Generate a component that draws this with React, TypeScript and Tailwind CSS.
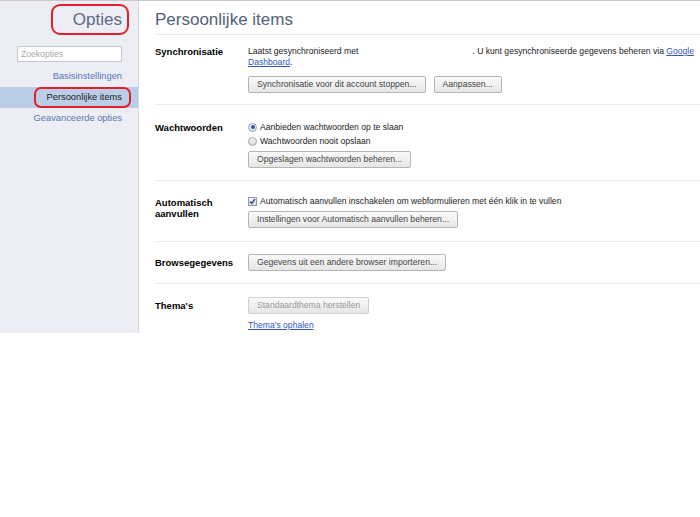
import React from 'react';

const body = 'text-[8.6px] leading-[11px] text-[#222]';
const labelCls = 'w-[93px] shrink-0 text-[9.5px] leading-[11px] font-bold text-black';

function Btn({ children, disabled }: { children: React.ReactNode; disabled?: boolean }) {
  return (
    <button
      className={
        'block h-[17px] px-[8px] rounded-[2px] border text-[8.6px] leading-[15px] whitespace-nowrap bg-gradient-to-b from-[#fafafa] to-[#e6e6e6] ' +
        (disabled ? 'border-[#cfcfcf] text-[#9a9a9a]' : 'border-[#b5b5b5] text-[#444]')
      }
    >
      {children}
    </button>
  );
}

function Radio({ checked }: { checked?: boolean }) {
  return (
    <span className="w-[9px] h-[9px] rounded-full border border-[#9aa3ad] bg-gradient-to-b from-[#f4f4f4] to-[#d9dde2] flex items-center justify-center shrink-0">
      {checked && <span className="w-[4px] h-[4px] rounded-full bg-[#2f5c9a]" />}
    </span>
  );
}

function Check() {
  return (
    <span className="w-[9px] h-[9px] border border-[#8d99a6] bg-gradient-to-b from-[#f7f7f7] to-[#dde1e6] flex items-center justify-center shrink-0">
      <svg width="7" height="7" viewBox="0 0 7 7">
        <path d="M1 3.5 L2.8 5.5 L6 1" fill="none" stroke="#2d4f8a" strokeWidth="1.4" />
      </svg>
    </span>
  );
}

function Link({ children }: { children: React.ReactNode }) {
  return <span className="text-[#3456c2] underline">{children}</span>;
}

export default function App() {
  return (
    <div className="w-[700px] h-[517px] bg-white border-t border-[#c9c9c9]" style={{ fontFamily: '"Liberation Sans", Arial, sans-serif' }}>
      <div className="flex">
        {/* Sidebar */}
        <div className="w-[139px] shrink-0 bg-[#eceef3] border-r border-[#d5d9e1] h-[332px] flex flex-col">
          <div className="flex justify-end pr-[9px] pt-[3px]">
            <span className="h-[31px] border-[2px] border-[#e0212b] rounded-[9px] pl-[20px] pr-[5px] text-[17px] leading-[27px] text-[#5c6a82]">
              Opties
            </span>
          </div>
          <div className="mt-[11px] ml-[17px] w-[105px] h-[16px] bg-white border border-[#c5c8cd] px-[3px] text-[8.6px] leading-[14px] text-[#a9a9a9]">
            Zoekopties
          </div>
          <div className="mt-[4px] h-[21px] pr-[16px] flex items-center justify-end text-[9.3px] text-[#5876b8]">
            Basisinstellingen
          </div>
          <div className="h-[21px] bg-[#bccde7] flex items-center justify-end pr-[7px]">
            <span className="h-[21px] border-[2px] border-[#e0212b] rounded-[7px] pl-[11px] pr-[7px] text-[9.3px] leading-[17px] text-[#1b1b1b]">
              Persoonlijke items
            </span>
          </div>
          <div className="h-[21px] pr-[16px] flex items-center justify-end text-[9.3px] text-[#5876b8]">
            Geavanceerde opties
          </div>
        </div>

        {/* Main */}
        <div className="flex-1 pl-[16px] h-[332px]">
          <div className="pt-[9px] pb-[4px] text-[17px] leading-[20px] text-[#53627b] border-b border-[#eaeaea]">
            Persoonlijke items
          </div>

          {/* Synchronisatie */}
          <div className="flex pt-[11px] pb-[11px] border-b border-[#eaeaea]">
            <div className={labelCls}>Synchronisatie</div>
            <div>
              <div className={body + ' whitespace-nowrap flex'}>
                <span>Laatst gesynchroniseerd met</span>
                <span className="w-[114px]" />
                <span>
                  . U kunt gesynchroniseerde gegevens beheren via <Link>Google</Link>
                </span>
              </div>
              <div className={body}>
                <Link>Dashboard</Link>.
              </div>
              <div className="mt-[8px] flex gap-[8px]">
                <Btn>Synchronisatie voor dit account stoppen...</Btn>
                <Btn>Aanpassen...</Btn>
              </div>
            </div>
          </div>

          {/* Wachtwoorden */}
          <div className="flex pt-[15px] pb-[12px] border-b border-[#eaeaea]">
            <div className={labelCls + ' mt-[2px]'}>Wachtwoorden</div>
            <div>
              <div className={body + ' h-[14px] flex items-center gap-[3px]'}>
                <Radio checked />
                <span>Aanbieden wachtwoorden op te slaan</span>
              </div>
              <div className={body + ' h-[14px] flex items-center gap-[3px]'}>
                <Radio />
                <span>Wachtwoorden nooit opslaan</span>
              </div>
              <div className="mt-[3px] flex">
                <Btn>Opgeslagen wachtwoorden beheren...</Btn>
              </div>
            </div>
          </div>

          {/* Automatisch aanvullen */}
          <div className="flex pt-[13px] pb-[13px] border-b border-[#eaeaea]">
            <div className={labelCls + ' mt-[3px]'}>
              Automatisch
              <br />
              aanvullen
            </div>
            <div>
              <div className={body + ' h-[14px] flex items-center gap-[3px] whitespace-nowrap'}>
                <Check />
                <span>Automatisch aanvullen inschakelen om webformulieren met één klik in te vullen</span>
              </div>
              <div className="mt-[3px] flex">
                <Btn>Instellingen voor Automatisch aanvullen beheren...</Btn>
              </div>
            </div>
          </div>

          {/* Browsegegevens */}
          <div className="flex items-center pt-[12px] pb-[12px] border-b border-[#eaeaea]">
            <div className={labelCls}>Browsegegevens</div>
            <Btn>Gegevens uit een andere browser importeren...</Btn>
          </div>

          {/* Thema's */}
          <div className="flex pt-[13px] pb-[2px]">
            <div className={labelCls + ' mt-[3px]'}>Thema's</div>
            <div>
              <div className="flex">
                <Btn disabled>Standaardthema herstellen</Btn>
              </div>
              <div className={body + ' mt-[6px]'}>
                <Link>Thema's ophalen</Link>
              </div>
            </div>
          </div>
        </div>
      </div>
    </div>
  );
}
